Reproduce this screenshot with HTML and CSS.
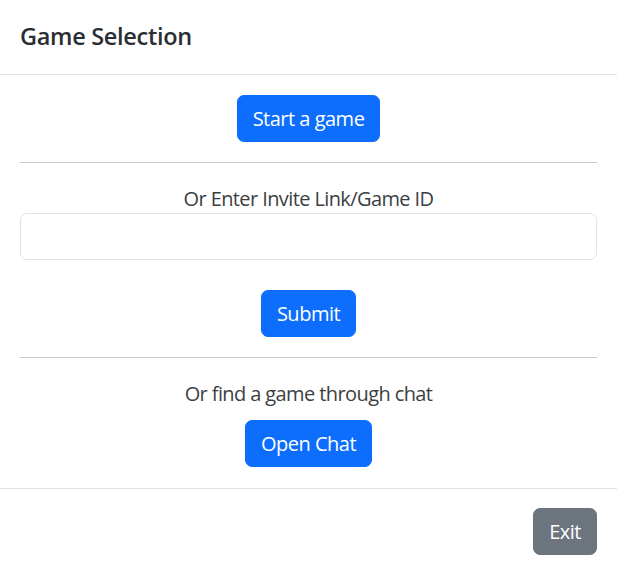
FILE: index.html
```html
<!DOCTYPE html>
<html lang="en">
<head>
<meta charset="utf-8">
<title>Game Selection</title>
<link rel="stylesheet" href="styles.css">
</head>
<body>
<div class="modal">
  <div class="modal-header">
    <h5 class="modal-title">Game Selection</h5>
  </div>
  <div class="modal-body">
    <div class="center">
      <button class="btn btn-primary">Start a game</button>
    </div>
    <hr class="divider">
    <div class="center">
      <label class="label" for="invite">Or Enter Invite Link/Game ID</label>
    </div>
    <input id="invite" class="form-control" type="text">
    <div class="center submit-row">
      <button class="btn btn-primary">Submit</button>
    </div>
    <hr class="divider">
    <div class="center">
      <p class="label chat-label">Or find a game through chat</p>
      <button class="btn btn-primary">Open Chat</button>
    </div>
  </div>
  <div class="modal-footer">
    <button class="btn btn-secondary">Exit</button>
  </div>
</div>
</body>
</html>
```
FILE: styles.css
```css
* { box-sizing: border-box; }
html, body {
  margin: 0;
  padding: 0;
  background: #ffffff;
}
body {
  font-family: "Open Sans", "Noto Sans", "Liberation Sans", sans-serif;
  color: #212529;
  font-size: 20px;
  line-height: 1.5;
  width: 617px;
  height: 573px;
  overflow: hidden;
}
.modal {
  width: 617px;
  height: 573px;
  background: #fff;
  display: flex;
  flex-direction: column;
}
.modal-header {
  height: 75px;
  padding: 0 20px;
  display: flex;
  align-items: center;
  border-bottom: 1px solid #dee2e6;
}
.modal-title {
  margin: 0;
  font-size: 23.5px;
  font-weight: 600;
  line-height: 1.5;
  letter-spacing: -0.3px;
  color: #2a2e33;
}
.modal-body {
  padding: 20px 20px;
  height: 413px;
}
.center {
  display: flex;
  flex-direction: column;
  align-items: center;
}
.btn {
  font-family: inherit;
  font-size: 20px;
  line-height: 30px;
  padding: 7.5px 15px;
  border: 1px solid transparent;
  border-radius: 7px;
  color: #fff;
  cursor: pointer;
  height: 47px;
  letter-spacing: -0.5px;
}
.btn-primary {
  background: #0d6efd;
  border-color: #0d6efd;
}
.btn-secondary {
  background: #6c757d;
  border-color: #6c757d;
}
.divider {
  margin: 20px 0;
  border: 0;
  border-top: 1px solid #c8c9ca;
  height: 0;
}
.label {
  display: block;
  color: #3b3f43;
  line-height: 30px;
  margin: 0;
  padding-top: 1px;
  letter-spacing: -0.6px;
}
.form-control {
  display: block;
  width: 100%;
  height: 47px;
  margin-top: -1px;
  padding: 7.5px 15px;
  font-size: 20px;
  font-family: inherit;
  border: 1px solid #dee2e6;
  border-radius: 7px;
  background: #fff;
}
.submit-row {
  margin-top: 30px;
}
.chat-label {
  margin-bottom: 11px;
}
.modal-footer {
  border-top: 1px solid #dee2e6;
  flex: 1;
  display: flex;
  justify-content: flex-end;
  align-items: flex-start;
  padding: 19px 20px 0 20px;
}
```
